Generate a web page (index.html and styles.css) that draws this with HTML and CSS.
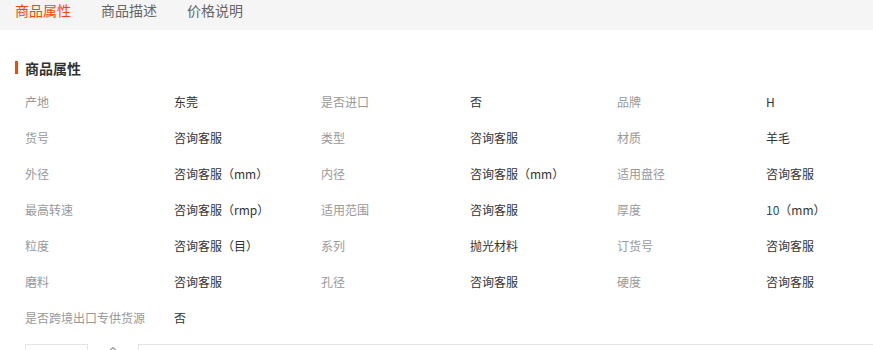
FILE: index.html
```html
<!DOCTYPE html>
<html lang="zh">
<head>
<meta charset="utf-8">
<link rel="stylesheet" href="styles.css">
</head>
<body>
<div class="tabs">
  <span class="tab active">商品属性</span>
  <span class="tab">商品描述</span>
  <span class="tab">价格说明</span>
</div>
<div class="section">
  <h2 class="title">商品属性</h2>
  <div class="grid">
    <span class="k">产地</span><span class="v">东莞</span>
    <span class="k">是否进口</span><span class="v">否</span>
    <span class="k">品牌</span><span class="v">H</span>

    <span class="k">货号</span><span class="v">咨询客服</span>
    <span class="k">类型</span><span class="v">咨询客服</span>
    <span class="k">材质</span><span class="v">羊毛</span>

    <span class="k">外径</span><span class="v">咨询客服（mm）</span>
    <span class="k">内径</span><span class="v">咨询客服（mm）</span>
    <span class="k">适用盘径</span><span class="v">咨询客服</span>

    <span class="k">最高转速</span><span class="v">咨询客服（rmp）</span>
    <span class="k">适用范围</span><span class="v">咨询客服</span>
    <span class="k">厚度</span><span class="v"><span class="num">10</span>（mm）</span>

    <span class="k">粒度</span><span class="v">咨询客服（目）</span>
    <span class="k">系列</span><span class="v">抛光材料</span>
    <span class="k">订货号</span><span class="v">咨询客服</span>

    <span class="k">磨料</span><span class="v">咨询客服</span>
    <span class="k">孔径</span><span class="v">咨询客服</span>
    <span class="k">硬度</span><span class="v">咨询客服</span>

    <span class="k">是否跨境出口专供货源</span><span class="v">否</span>
  </div>
  <div class="bottom">
    <div class="box small"></div>
    <div class="caret">
      <svg width="8" height="5" viewBox="0 0 8 5"><path d="M1 4.5 L4 1.5 L7 4.5" fill="none" stroke="#999" stroke-width="1.2"/></svg>
    </div>
    <div class="box wide"></div>
  </div>
</div>
</body>
</html>
```
FILE: styles.css
```css
html, body {
  margin: 0;
  padding: 0;
  background: #fff;
  font-family: "Noto Sans CJK SC", "Liberation Sans", sans-serif;
  overflow: hidden;
}
.tabs {
  height: 30px;
  background: #f5f5f5;
  display: flex;
  align-items: flex-start;
  padding-left: 15px;
  gap: 30px;
}
.tab {
  font-size: 14px;
  line-height: 20px;
  color: #666;
}
.tab.active {
  color: #ff4400;
}
.section {
  padding: 0 0 0 25px;
}
.title {
  margin: 28px 0 0 0;
  font-size: 14px;
  font-weight: bold;
  color: #333;
  line-height: 20px;
  position: relative;
}
.title::before {
  content: "";
  position: absolute;
  left: -10px;
  top: 3px;
  width: 3px;
  height: 13px;
  background: #ff4400;
}
.grid {
  display: grid;
  grid-template-columns: 149px 147px 149px 147px 149px 1fr;
  grid-auto-rows: 36px;
  margin-top: 6px;
  font-size: 12px;
  line-height: 36px;
}
.k {
  color: #999;
  white-space: nowrap;
}
.v {
  color: #333;
  white-space: nowrap;
}
.num {
  color: #2a4a78;
}
.bottom {
  display: flex;
  align-items: flex-start;
  margin-top: 8px;
  height: 20px;
}
.box {
  height: 20px;
  border: 1px solid #e5e5e5;
  border-bottom: none;
  box-sizing: border-box;
}
.box.small {
  width: 63px;
}
.caret {
  width: 50px;
  display: flex;
  justify-content: center;
  padding-top: 2px;
}
.caret svg {
  display: block;
}
.box.wide {
  flex: 1;
  border-right: none;
}
```
